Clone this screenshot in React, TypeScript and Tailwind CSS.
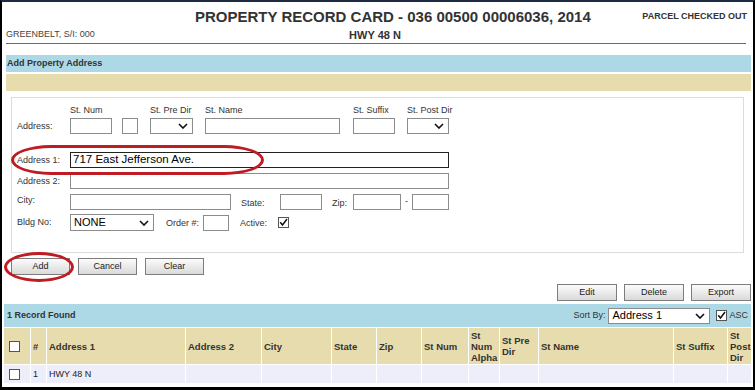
import React from "react";

const Chevron = () => (
  <svg width="10" height="6" viewBox="0 0 10 6" className="shrink-0">
    <path d="M1 1 L5 5 L9 1" fill="none" stroke="#111" strokeWidth="1.6" />
  </svg>
);

const Check = ({ checked }: { checked?: boolean }) => (
  <div className="flex h-[11px] w-[11px] shrink-0 items-center justify-center border border-[#555] bg-white">
    {checked && (
      <svg width="9" height="9" viewBox="0 0 9 9">
        <path d="M1.2 4.2 L3.5 7 L8 1" fill="none" stroke="#111" strokeWidth="1.5" />
      </svg>
    )}
  </div>
);

const Input = ({ w, children, dark }: { w: string; children?: React.ReactNode; dark?: boolean }) => (
  <div
    className={`${w} flex h-[16px] shrink-0 items-center bg-white pl-[2px] text-[11.5px] leading-none text-black ${
      dark ? "border border-[#222]" : "border border-[#8c8c8c]"
    }`}
  >
    {children}
  </div>
);

const Select = ({ w, value, h = "h-[16px]" }: { w: string; value?: string; h?: string }) => (
  <div
    className={`${w} ${h} flex shrink-0 items-center justify-between border border-[#8c8c8c] bg-white pl-[3px] pr-[4px] text-[11px] leading-none text-black`}
  >
    <span>{value}</span>
    <Chevron />
  </div>
);

const Label = ({ w, children, className = "" }: { w: string; children: React.ReactNode; className?: string }) => (
  <div className={`${w} shrink-0 text-[9px] leading-none text-[#333] ${className}`}>{children}</div>
);

const Button = ({ label, w = "w-[59px]" }: { label: string; w?: string }) => (
  <div
    className={`${w} flex h-[17px] items-center justify-center border border-[#7d7d7d] bg-linear-to-b from-[#fbfbfb] to-[#dadada] text-[9px] leading-none text-[#222]`}
  >
    {label}
  </div>
);

const columns = [
  "",
  "#",
  "Address 1",
  "Address 2",
  "City",
  "State",
  "Zip",
  "St Num",
  "St Num Alpha",
  "St Pre Dir",
  "St Name",
  "St Suffix",
  "St Post Dir",
];

export default function App() {
  return (
    <div className="box-border h-[390px] w-[755px] overflow-hidden border-x-2 border-t-2 border-b-[3px] border-x-black border-t-[#1d2c42] border-b-black bg-white font-['Liberation_Sans',Arial,sans-serif] text-[#333]">
      {/* header */}
      <div className="flex items-start justify-between pl-[193px] pr-[6px] pt-[7px]">
        <div className="text-[15px] font-bold leading-none text-[#333]">
          PROPERTY RECORD CARD - 036 00500 00006036, 2014
        </div>
        <div className="mt-[3px] text-[9px] font-bold leading-none text-[#333]">PARCEL CHECKED OUT</div>
      </div>
      <div className="mt-[6px] grid grid-cols-[1fr_auto_1fr] items-start">
        <div className="pl-[4px] text-[9px] leading-none text-[#444]">GREENBELT, S/I: 000</div>
        <div className="pr-[5px] text-[11px] font-bold leading-none text-[#333]">HWY 48 N</div>
        <div />
      </div>
      <div className="ml-[4px] mt-[2px] w-[740px] border-t border-[#6b6b6b]" />

      <div className="ml-[4px] mt-[11px] flex h-[17px] w-[745px] items-center bg-[#add8e6] pl-[1px] text-[9px] font-bold leading-none text-[#333]">
        Add Property Address
      </div>
      <div className="ml-[4px] mt-[2px] h-[17px] w-[745px] bg-[#e7dcad]" />

      {/* form */}
      <div className="ml-[9px] mt-[6px] box-border h-[156px] w-[733px] border border-[#dcdcdc] pl-[5px] pt-[8px]">
        <div className="flex h-[9px]">
          <Label w="w-[53px]">{""}</Label>
          <Label w="w-[80px]">St. Num</Label>
          <Label w="w-[55px]">St. Pre Dir</Label>
          <Label w="w-[148px]">St. Name</Label>
          <Label w="w-[54px]">St. Suffix</Label>
          <Label w="w-[60px]">St. Post Dir</Label>
        </div>
        <div className="mt-[3px] flex h-[16px] items-center">
          <Label w="w-[53px]">Address:</Label>
          <Input w="w-[42px]" />
          <div className="ml-[10px]">
            <Input w="w-[16px]" />
          </div>
          <div className="ml-[12px]">
            <Select w="w-[43px]" />
          </div>
          <div className="ml-[12px]">
            <Input w="w-[135px]" />
          </div>
          <div className="ml-[13px]">
            <Input w="w-[42px]" />
          </div>
          <div className="ml-[12px]">
            <Select w="w-[42px]" />
          </div>
        </div>
        <div className="relative mt-[18px] flex h-[16px] items-center">
          <Label w="w-[53px]">Address 1:</Label>
          <Input w="w-[379px]" dark>
            717 East Jefferson Ave.
          </Input>
          <div className="pointer-events-none absolute left-[-6px] top-[-7px] h-[30px] w-[253px] rounded-[40px/15px] border-[3.5px] border-[#bf1b22]" />
        </div>
        <div className="mt-[5px] flex h-[16px] items-center">
          <Label w="w-[53px]">Address 2:</Label>
          <Input w="w-[379px]" />
        </div>
        <div className="mt-[4px] flex h-[17px] items-center">
          <Label w="w-[53px]" className="mb-[2px]">City:</Label>
          <Input w="w-[161px]" />
          <Label w="w-[39px]" className="ml-[10px] mt-[3px]">State:</Label>
          <Input w="w-[42px]" />
          <Label w="w-[21px]" className="ml-[10px] mt-[3px]">Zip:</Label>
          <Input w="w-[48px]" />
          <div className="w-[11px] text-center text-[9px] leading-none">-</div>
          <Input w="w-[37px]" />
        </div>
        <div className="mt-[4px] flex h-[17px] items-center">
          <Label w="w-[53px]">Bldg No:</Label>
          <Select w="w-[84px]" h="h-[17px]" value="NONE" />
          <Label w="w-[37px]" className="ml-[12px] mt-[2px]">Order #:</Label>
          <Input w="w-[26px]" />
          <Label w="w-[38px]" className="ml-[11px] mt-[2px]">Active:</Label>
          <Check checked />
        </div>
      </div>

      {/* action buttons */}
      <div className="ml-[9px] mt-[5px] flex gap-[8px]">
        <div className="relative">
          <Button label="Add" />
          <div className="pointer-events-none absolute left-[-7px] top-[-6px] h-[30px] w-[70px] rounded-[50%] border-[3.5px] border-[#bf1b22]" />
        </div>
        <Button label="Cancel" />
        <Button label="Clear" />
      </div>

      <div className="mt-[9px] flex justify-end gap-[7px] pr-[2px]">
        <Button label="Edit" w="w-[60px]" />
        <Button label="Delete" w="w-[60px]" />
        <Button label="Export" w="w-[60px]" />
      </div>

      {/* records bar */}
      <div className="ml-[2px] mt-[3px] flex h-[23px] w-[747px] items-center justify-between bg-[#add8e6] pl-[3px] pr-[3px]">
        <div className="text-[9px] font-bold leading-none text-[#333]">1 Record Found</div>
        <div className="flex items-center">
          <span className="mr-[3px] text-[9px] leading-none text-[#333]">Sort By:</span>
          <Select w="w-[102px]" value="Address 1" />
          <div className="ml-[6px]">
            <Check checked />
          </div>
          <span className="ml-[2px] text-[9px] leading-none text-[#333]">ASC</span>
        </div>
      </div>

      {/* table */}
      <div className="ml-[2px] mt-px grid grid-cols-[26px_15px_138px_75px_69px_44px_44px_46px_30px_38px_134px_53px_23px] gap-px">
        {columns.map((c, i) => (
          <div
            key={"h" + i}
            className={`flex h-[36px] items-center bg-[#e7dcad] text-[9.5px] font-bold leading-[11px] text-[#333] ${
              i === 0 ? "pl-[5px]" : "pl-[2px]"
            }`}
          >
            {i === 0 ? <Check /> : c}
          </div>
        ))}
        {columns.map((c, i) => (
          <div
            key={"r" + i}
            className={`flex h-[18px] items-center bg-[#eeeefb] text-[9px] leading-none text-[#222] ${
              i === 0 ? "pl-[5px]" : "pl-[2px]"
            }`}
          >
            {i === 0 ? <Check /> : i === 1 ? "1" : i === 2 ? "HWY 48 N" : ""}
          </div>
        ))}
      </div>
    </div>
  );
}
